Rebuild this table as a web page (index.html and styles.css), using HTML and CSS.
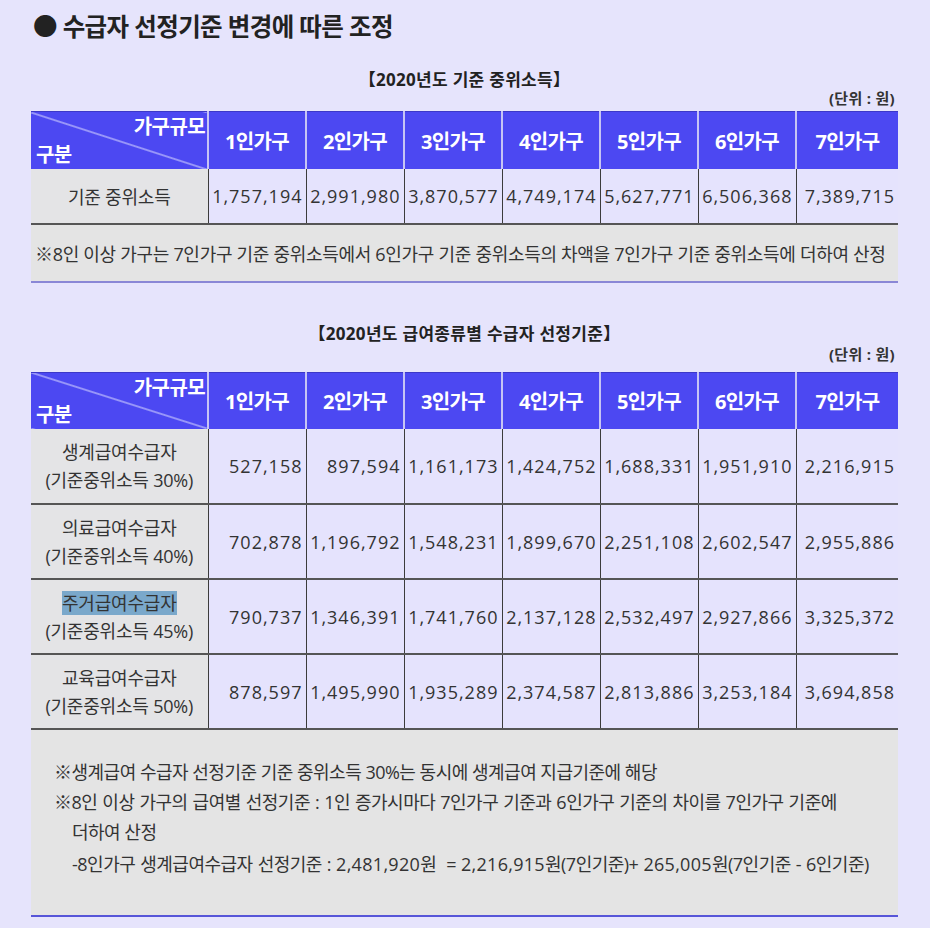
FILE: index.html
```html
<!DOCTYPE html>
<html lang="ko">
<head>
<meta charset="utf-8">
<title>수급자 선정기준 변경에 따른 조정</title>
<link rel="stylesheet" href="styles.css">
</head>
<body>
<div class="page">
  <div class="content">
    <h1 class="title">● 수급자 선정기준 변경에 따른 조정</h1>

    <div class="caption caption-1">【2020년도 기준 중위소득】</div>
    <div class="unit unit-1">(단위 : 원)</div>
    <table class="grid grid-1">
      <colgroup>
        <col class="c-label"><col class="c-num"><col class="c-num"><col class="c-num"><col class="c-num"><col class="c-num"><col class="c-num"><col class="c-last">
      </colgroup>
      <thead>
        <tr>
          <th class="diag"><span class="diag-top">가구규모</span><span class="diag-bottom">구분</span></th>
          <th>1인가구</th><th>2인가구</th><th>3인가구</th><th>4인가구</th><th>5인가구</th><th>6인가구</th><th class="last">7인가구</th>
        </tr>
      </thead>
      <tbody>
        <tr class="row-1">
          <td class="label">기준 중위소득</td>
          <td>1,757,194</td><td>2,991,980</td><td>3,870,577</td><td>4,749,174</td><td>5,627,771</td><td>6,506,368</td><td class="last">7,389,715</td>
        </tr>
        <tr>
          <td class="note note-1" colspan="8">※8인 이상 가구는 7인가구 기준 중위소득에서 6인가구 기준 중위소득의 차액을 7인가구 기준 중위소득에 더하여 산정</td>
        </tr>
      </tbody>
    </table>

    <div class="caption caption-2">【2020년도 급여종류별 수급자 선정기준】</div>
    <div class="unit unit-2">(단위 : 원)</div>
    <table class="grid grid-2">
      <colgroup>
        <col class="c-label"><col class="c-num"><col class="c-num"><col class="c-num"><col class="c-num"><col class="c-num"><col class="c-num"><col class="c-last">
      </colgroup>
      <thead>
        <tr>
          <th class="diag"><span class="diag-top">가구규모</span><span class="diag-bottom">구분</span></th>
          <th>1인가구</th><th>2인가구</th><th>3인가구</th><th>4인가구</th><th>5인가구</th><th>6인가구</th><th class="last">7인가구</th>
        </tr>
      </thead>
      <tbody>
        <tr class="row-2">
          <td class="label">생계급여수급자<br>(기준중위소득 30%)</td>
          <td>527,158</td><td>897,594</td><td>1,161,173</td><td>1,424,752</td><td>1,688,331</td><td>1,951,910</td><td class="last">2,216,915</td>
        </tr>
        <tr class="row-2">
          <td class="label">의료급여수급자<br>(기준중위소득 40%)</td>
          <td>702,878</td><td>1,196,792</td><td>1,548,231</td><td>1,899,670</td><td>2,251,108</td><td>2,602,547</td><td class="last">2,955,886</td>
        </tr>
        <tr class="row-2">
          <td class="label"><span class="hl">주거급여수급자</span><br>(기준중위소득 45%)</td>
          <td>790,737</td><td>1,346,391</td><td>1,741,760</td><td>2,137,128</td><td>2,532,497</td><td>2,927,866</td><td class="last">3,325,372</td>
        </tr>
        <tr class="row-2">
          <td class="label">교육급여수급자<br>(기준중위소득 50%)</td>
          <td>878,597</td><td>1,495,990</td><td>1,935,289</td><td>2,374,587</td><td>2,813,886</td><td>3,253,184</td><td class="last">3,694,858</td>
        </tr>
        <tr>
          <td class="note note-2" colspan="8">
            <p class="n-line">※생계급여 수급자 선정기준 기준 중위소득 30%는 동시에 생계급여 지급기준에 해당</p>
            <p class="n-line n-wide">※8인 이상 가구의 급여별 선정기준 : 1인 증가시마다 7인가구 기준과 6인가구 기준의 차이를 7인가구 기준에</p>
            <p class="n-line n-indent">더하여 산정</p>
            <p class="n-line n-indent n-gap n-wide">-8인가구 생계급여수급자 선정기준 : <span class="num">2,481,920</span>원&nbsp; = <span class="num">2,216,915</span>원(7인기준)+ <span class="num">265,005</span>원(7인기준 - 6인기준)</p>
          </td>
        </tr>
      </tbody>
    </table>
  </div>
</div>
</body>
</html>
```

FILE: styles.css
```css
* { box-sizing: border-box; }

html, body {
  margin: 0;
  padding: 0;
  background: #ffffff;
}

body {
  font-family: "Open Sans", "Noto Sans CJK KR", sans-serif;
  color: #2a2a2a;
}

.page {
  width: 930px;
  height: 928px;
  background: #e6e4fc;
  padding-top: 11px;
}

.content {
  margin-left: 31px;
  width: 867px;
}

.title {
  margin: 0 0 0 2px;
  font-size: 24.5px;
  line-height: 32px;
  font-weight: 700;
  color: #222;
  letter-spacing: -0.6px;
}

.caption {
  text-align: center;
  font-size: 17px;
  line-height: 22px;
  font-weight: 700;
  color: #222;
  letter-spacing: 0.3px;
}

.caption-1 { margin-top: 26px; }
.caption-2 { margin-top: 40px; }

.unit {
  text-align: right;
  padding-right: 3px;
  font-size: 15px;
  line-height: 18px;
  font-weight: 700;
  color: #333;
  letter-spacing: 0.3px;
}

.unit-1 { margin-top: -2px; margin-bottom: 4px; }
.unit-2 { margin-top: 0; margin-bottom: 9px; }

.grid {
  width: 867px;
  table-layout: fixed;
  border-collapse: collapse;
}

.c-label { width: 177px; }
.c-num { width: 98px; }
.c-last { width: 102px; }

.grid th {
  background: #4c48f2;
  color: #ffffff;
  font-size: 20px;
  font-weight: 700;
  letter-spacing: -0.6px;
  height: 57px;
  padding: 0;
  border-right: 2px solid #c6c4f4;
  border-top: 1px solid #3c38c8;
  text-align: center;
}

.grid th.last { border-right: none; }

.grid th.diag {
  position: relative;
  background-color: #4c48f2;
  background-image: linear-gradient(to top right, transparent calc(50% - 1px), #dcdcff 50%, transparent calc(50% + 1px));
  border-right: 2px solid #c6c4f4;
}

.diag-top {
  position: absolute;
  right: 2px;
  top: 1px;
  line-height: 28px;
}

.diag-bottom {
  position: absolute;
  left: 5px;
  bottom: 0;
  line-height: 28px;
}

.grid td {
  background: #e5e3fd;
  border-right: 1px solid #3c3c3c;
  border-bottom: 2px solid #555;
  padding: 0 3px 0 0;
  text-align: right;
  font-size: 18px;
  letter-spacing: 1px;
  color: #333;
}

.grid td.last { border-right: none; }

.grid td.label {
  background: #e4e4e6;
  text-align: center;
  padding: 0;
  font-size: 18px;
  letter-spacing: -0.2px;
  color: #333;
}

.grid .row-1 td { height: 55px; }
.grid .row-2 td { height: 75px; line-height: 28px; }

.hl { background: #7aa8cb; }

.grid td.note {
  background: #e4e4e4;
  text-align: left;
  color: #333;
  border-right: none;
  font-size: 18px;
}

.grid td.note-1 {
  height: 58px;
  letter-spacing: -0.3px;
  padding: 0 0 0 4px;
  border-bottom: 2px solid #8a87d6;
}

.grid td.note-2 {
  height: 187px;
  letter-spacing: -0.5px;
  padding: 27px 0 34px 23px;
  vertical-align: top;
  border-bottom: 2px solid #5755d8;
}

.n-line {
  margin: 0;
  line-height: 30px;
  white-space: nowrap;
}

.n-wide { word-spacing: 0.8px; }
.num { letter-spacing: 0.3px; }

.n-indent { padding-left: 18px; }
.n-gap { margin-top: 2px; }
```
